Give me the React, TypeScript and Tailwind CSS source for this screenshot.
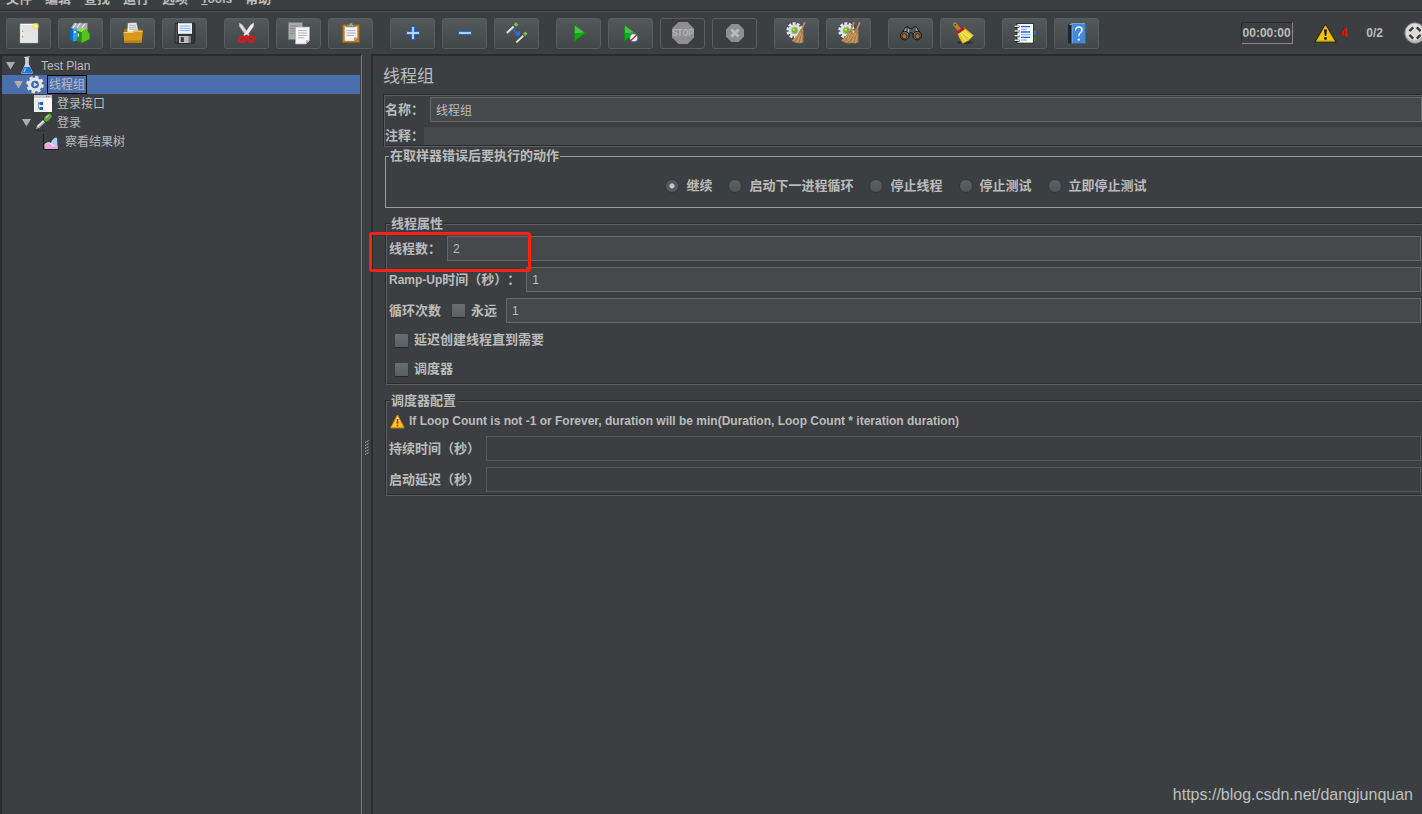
import React, { useState } from "react";

const metal = "#dcdcdc";

function Icon({ children }: { children: React.ReactNode }) {
  return (
    <svg width="25" height="23" viewBox="0 0 25 23" aria-hidden="true">
      {children}
    </svg>
  );
}

function Gear({ x, y }: { x: number; y: number }) {
  return (
    <g transform={`translate(${x} ${y})`}>
      <circle r="6.9" fill="none" stroke="#e6e6e6" strokeWidth="2.6" strokeDasharray="2.9 1.43" />
      <circle r="6.2" fill="#dedede" />
      <circle r="3.6" fill="#b9bdb6" />
      <circle r="2.8" fill="#6cb81c" />
      <circle cx="-0.6" cy="-0.8" r="1.2" fill="#c3ec7c" />
    </g>
  );
}

function Broom({ x }: { x: number }) {
  return (
    <g transform={`translate(${x} 0)`}>
      <path d="M20.5 .8 L17.6 8" stroke="#b58a58" strokeWidth="1.8" strokeLinecap="round" />
      <path d="M16.5 7 L19.4 8.2 L19.4 20.5 L16 21.4 L11 20.6 L7.6 18.6 Q13.5 14 16.5 7Z" fill="#b8894f" />
      <path d="M17 9 L11 20 M18 9 L15 21 M18.6 10 L18 21" stroke="#8a6436" strokeWidth=".5" fill="none" />
      <path d="M17.5 10 L13 20.4 M18.4 12 L16.6 20.6 M16 11 L9.5 18.8" stroke="#dcb684" strokeWidth=".6" fill="none" />
    </g>
  );
}

const icons: Record<string, React.ReactNode> = {
  new: (
    <Icon>
      <defs>
        <radialGradient id="glow">
          <stop offset="0" stopColor="#fffef0" />
          <stop offset=".45" stopColor="#f6e868" />
          <stop offset="1" stopColor="#e8d850" stopOpacity="0" />
        </radialGradient>
      </defs>
      <rect x="4" y="1.7" width="18" height="19.3" fill="#fff" stroke="#8d8d86" strokeWidth=".6" />
      <rect x="5.3" y="3" width="15.6" height="16.8" fill="#e4e4e4" />
      <path d="M6.6 8.5v1.5M6.6 14v1.5" stroke="#999" strokeWidth="1" />
      <circle cx="19.7" cy="4.2" r="4" fill="url(#glow)" />
    </Icon>
  ),
  templates: (
    <Icon>
      <path d="M3 6 L6 .8 L10 1.6 L12 .5 L15 1.5 L19.5 .8 L19.5 8 L5 10Z" fill="#a9adad" />
      <path d="M5 6 L8 1.5 M9 6 L12 1.5 M14 6 L17 1.5" stroke="#e8e8e8" strokeWidth="1.2" />
      <path d="M2 5.5 L5 7 L5 19.5 L2 17.5Z" fill="#1269b0" />
      <path d="M5 7 L9 5.5 L9 18.5 L5 19.5Z" fill="#2fa0e6" />
      <path d="M6 10h2" stroke="#fff" strokeWidth="1.4" />
      <path d="M8.8 8.5 L13.6 10.2 L13.6 21 L8.8 18.4Z" fill="#2a8e10" />
      <path d="M13.6 10.2 L18 6.4 L21.6 12 L21.6 17 L13.6 21Z" fill="#52c41a" />
      <path d="M8.8 8.5 L14 6 L18 6.4 L13.6 10.2Z" fill="#84e24a" />
      <path d="M10.3 11.5v3" stroke="#e8ffe0" strokeWidth="1.4" />
    </Icon>
  ),
  open: (
    <Icon>
      <path d="M4 7 L10 6 L12 8 L22 7.5 L22.5 12 L4 12Z" fill="#a87410" />
      <path d="M8 1 L16.5 .8 L18.6 10.5 L7 11.5Z" fill="#f4f4f4" stroke="#999" strokeWidth=".5" />
      <path d="M9.2 3.2h6.6M9 5.2h7.4M9 7.2h8" stroke="#999" strokeWidth=".8" />
      <path d="M3.3 9.7 L12.5 9.7 L14 8.6 L23 8.6 L21.6 20 Q21.4 21 20.4 21 L5.5 21 Q4.5 21 4.3 20Z" fill="#d99a1c" />
      <path d="M4 10.5 L13 10.5 L14.4 9.4 L22.3 9.4" stroke="#f5cd6c" strokeWidth=".9" fill="none" />
      <path d="M4.5 18.6 L21.8 18.6 L21.5 21 L4.8 21Z" fill="#b87c10" />
    </Icon>
  ),
  save: (
    <Icon>
      <rect x="3" y="1" width="20" height="20.3" rx="1.2" fill="#33353a" stroke="#1c1d20" strokeWidth=".6" />
      <path d="M4.2 2v18" stroke="#666a70" strokeWidth=".8" />
      <rect x="6" y="1.2" width="14" height="10.6" fill="#eef5fc" />
      <path d="M7.5 4h11M7.5 6.3h11M7.5 8.6h11" stroke="#87aede" strokeWidth="1" />
      <rect x="7" y="14" width="12" height="7" fill="#bcbcbc" />
      <rect x="8.8" y="15.2" width="3" height="4.8" fill="#33353a" />
      <rect x="16.6" y="14" width="2.4" height="7" fill="#77797d" />
    </Icon>
  ),
  cut: (
    <Icon>
      <path d="M5 .8 L8.2 2.6 L15.6 13 L13 15.2 L5.4 4.4Z" fill={metal} stroke="#8b8b8b" strokeWidth=".4" />
      <path d="M20 .8 L16.8 2.6 L9.4 13 L12 15.2 L19.6 4.4Z" fill="#f2f2f2" stroke="#8b8b8b" strokeWidth=".4" />
      <ellipse cx="7.9" cy="17.2" rx="2.9" ry="2.5" fill="none" stroke="#d81c1c" strokeWidth="2.4" />
      <ellipse cx="17.1" cy="17.2" rx="2.9" ry="2.5" fill="none" stroke="#d81c1c" strokeWidth="2.4" />
      <path d="M9 14.8 L12.5 12.6 L16 14.8 L12.5 17Z" fill="#d01818" />
    </Icon>
  ),
  copy: (
    <Icon>
      <rect x="2.3" y=".5" width="14" height="17" fill="#a6a9a9" stroke="#787b7b" strokeWidth=".7" />
      <path d="M4.5 4h8M4.5 6.5h5M4.5 9h5M4.5 11.5h4" stroke="#808383" strokeWidth=".8" />
      <path d="M9.5 5 H23.5 V18.5 L20 22 H9.5Z" fill="#f4f4f4" stroke="#aaa" strokeWidth=".6" />
      <path d="M12 8.6h9M12 11h9M12 13.4h9M12 15.8h6" stroke="#b0b0b0" strokeWidth=".9" />
      <path d="M23.5 18.5 H20 V22Z" fill="#aaa" />
    </Icon>
  ),
  paste: (
    <Icon>
      <rect x="4.3" y="2.3" width="17.4" height="18.5" rx="1" fill="#c07c18" stroke="#80500a" strokeWidth=".8" />
      <path d="M6.6 4.5 H19.4 V15.5 L16 19 H6.6Z" fill="#f3f3f3" stroke="#999" strokeWidth=".4" />
      <path d="M8.5 8.6h9M8.5 11h9M8.5 13.4h7.5" stroke="#aaa" strokeWidth=".9" />
      <path d="M19.4 15.5 H16 V19Z" fill="#a9a9a9" />
      <path d="M8.8 4.8 V3 H11 Q11.3 .8 13 .8 T15 3 H17.2 V4.8Z" fill="#a4a79e" stroke="#5e6058" strokeWidth=".6" />
    </Icon>
  ),
  expand: (
    <Icon>
      <path d="M11.5 4.5 H14.5 V9.5 H19.5 V12.5 H14.5 V17.5 H11.5 V12.5 H6.5 V9.5 H11.5Z" fill="#b9d4f2" stroke="#2a68c4" strokeWidth="1.1" />
    </Icon>
  ),
  collapse: (
    <Icon>
      <rect x="6.5" y="9.5" width="13" height="3" fill="#b9d4f2" stroke="#2a68c4" strokeWidth="1.1" />
    </Icon>
  ),
  toggle: (
    <Icon>
      <path d="M3 11 L10 4.2" stroke="#e8e8e8" strokeWidth="2.2" />
      <path d="M3.6 11.8 L10.4 5.2" stroke="#777" strokeWidth=".6" />
      <path d="M9 2.8 L11.5 5.4" stroke="#555" strokeWidth="1.3" />
      <path d="M10.8 3.6 L13.2 1.4" stroke="#7cba58" strokeWidth="3.4" />
      <path d="M12.3 20.3 L19.5 13.6" stroke="#e8e8e8" strokeWidth="1.8" />
      <path d="M18.3 12 L21 14.5" stroke="#555" strokeWidth="1.2" />
      <path d="M20 12.8 L22.6 10.6" stroke="#7cba58" strokeWidth="3.2" />
      <path d="M10 8 L14.3 12.2" stroke="#1c7cf4" strokeWidth="1.8" strokeDasharray="2 .5" />
      <path d="M15.8 8.6 V13.6 H10.8Z" fill="#1c7cf4" />
    </Icon>
  ),
  start: (
    <Icon>
      <path d="M8.2 2 L20 11 L8.2 20Z" fill="#0c8a0c" />
      <path d="M8.8 3.4 L18.4 10.6 L8.8 11.5Z" fill="#58b858" />
      <path d="M8.8 11.3 L18.8 11 L8.8 18.6Z" fill="#0bb00b" />
    </Icon>
  ),
  startNoPause: (
    <Icon>
      <path d="M6.2 2 L17.6 11 L6.2 20Z" fill="#0c8a0c" />
      <path d="M6.8 3.4 L16 10.6 L6.8 11.5Z" fill="#58b858" />
      <path d="M6.8 11.3 L16.4 11 L6.8 18.6Z" fill="#0bb00b" />
      <circle cx="15.8" cy="15.7" r="4.1" fill="#f4f6fb" stroke="#3b78c8" strokeWidth="1.1" />
      <path d="M12.2 19.2 L19.4 12.2" stroke="#d81e1e" strokeWidth="1.4" />
    </Icon>
  ),
  stop: (
    <Icon>
      <path d="M8.5 0 H17.5 L24 6.5 V15.5 L17.5 22 H8.5 L2 15.5 V6.5Z" fill="#8f8f8f" />
      <text x="13" y="14.4" textAnchor="middle" fontSize="8.5" fontWeight="700" fill="#b4b4b4" className="font-['Roboto',sans-serif]">
        STOP
      </text>
    </Icon>
  ),
  shutdown: (
    <Icon>
      <path d="M9.4 2 H16.6 L22 7.4 V14.6 L16.6 20 H9.4 L4 14.6 V7.4Z" fill="#8f8f8f" />
      <path d="M9.4 7.4 L16.6 14.6 M16.6 7.4 L9.4 14.6" stroke="#bcbcbc" strokeWidth="2.8" />
    </Icon>
  ),
  clear: (
    <Icon>
      <Gear x={10.6} y={8.4} />
      <Broom x={0} />
    </Icon>
  ),
  clearAll: (
    <Icon>
      <Gear x={10.4} y={8.4} />
      <Broom x={-2.6} />
      <Broom x={3} />
    </Icon>
  ),
  search: (
    <Icon>
      <path d="M7 6 Q8 3.8 10.5 5 L12.5 7 L13.5 7 L15.5 5 Q18 3.8 19 6 L23 12 L18 17 L14.5 11 H11.5 L8 17 L3 12Z" fill="#54565a" stroke="#151515" strokeWidth="1" />
      <path d="M8 6.5 L6 10.5 M18 6.5 L20 10.5 M11 7 L10 10" stroke="#b5b8bb" strokeWidth="1.2" />
      <circle cx="6.8" cy="13.6" r="4.3" fill="#66696c" stroke="#101010" strokeWidth="1" />
      <circle cx="19.2" cy="13.6" r="4.3" fill="#66696c" stroke="#101010" strokeWidth="1" />
      <circle cx="6.4" cy="14.2" r="2.5" fill="#b86a30" stroke="#2b1608" strokeWidth=".8" />
      <circle cx="19.6" cy="14.2" r="2.5" fill="#b86a30" stroke="#2b1608" strokeWidth=".8" />
    </Icon>
  ),
  reset: (
    <Icon>
      <ellipse cx="15" cy="20.6" rx="8" ry="1.5" fill="#303234" />
      <path d="M5 2.4 L9.6 8" stroke="#b8802c" strokeWidth="4" strokeLinecap="round" />
      <circle cx="5.2" cy="2.8" r=".9" fill="#5c3c10" />
      <path d="M7 10 L14 5.6 L23.6 13.4 L18.6 18.4 L12.6 21.6 Q9.4 17 7 10Z" fill="#e8d02c" stroke="#a88c10" strokeWidth=".5" />
      <path d="M12 10 L20 16 M10.5 11 L16 19 M13.5 8.5 L21.5 14.5" stroke="#fff49a" strokeWidth=".8" />
      <path d="M6.8 11 L14.2 6.2" stroke="#c81818" strokeWidth="2.8" />
    </Icon>
  ),
  functions: (
    <Icon>
      <rect x="21" y="9" width="2.4" height="4.4" fill="#2a7ce0" />
      <rect x="21" y="15" width="2.4" height="4.4" fill="#1c9a28" />
      <rect x="5" y="1.5" width="16.4" height="19.6" fill="#fcfcfc" stroke="#1a1a1a" strokeWidth=".8" />
      <path d="M9 4.6h9M9 10h9M9 15.4h9" stroke="#1a64d8" strokeWidth="1.3" />
      <path d="M9 7.3h6M9 12.7h9.5M9 18h6" stroke="#6f9fe4" strokeWidth="1" />
      <path d="M2.6 4.6h4.8M2.6 9.4h4.8M2.6 14.2h4.8M2.6 18.6h4.8" stroke="#151515" strokeWidth="2.2" />
      <path d="M2.6 4.2h4.4M2.6 9h4.4M2.6 13.8h4.4M2.6 18.2h4.4" stroke="#e2e2e2" strokeWidth="1.6" />
    </Icon>
  ),
  help: (
    <Icon>
      <path d="M4.2 2.6 L8 .8 V21.4 H4.2Z" fill="#1e2228" />
      <path d="M5 2.8 L8 1.2 H21 L21 2.6Z" fill="#cfd6de" />
      <rect x="7.6" y="1.6" width="13.8" height="19.8" fill="#4488dc" />
      <path d="M8.2 1.6v19.8" stroke="#79b2f2" strokeWidth=".8" />
      <path d="M11.6 8.4 Q11.6 5 14.8 5 Q18 5 18 8 Q18 9.8 16.2 11 Q14.8 12 14.8 14.2" stroke="#f2f8ff" strokeWidth="1.5" fill="none" />
      <circle cx="14.8" cy="17.6" r="1.2" fill="#f2f8ff" />
    </Icon>
  ),
};

const toolGroups: { icon: string; label: string; disabled?: boolean }[][] = [
  [
    { icon: "new", label: "新建" },
    { icon: "templates", label: "模板" },
    { icon: "open", label: "打开" },
    { icon: "save", label: "保存" },
  ],
  [
    { icon: "cut", label: "剪切" },
    { icon: "copy", label: "复制" },
    { icon: "paste", label: "粘贴" },
  ],
  [
    { icon: "expand", label: "展开" },
    { icon: "collapse", label: "折叠" },
    { icon: "toggle", label: "切换" },
  ],
  [
    { icon: "start", label: "启动" },
    { icon: "startNoPause", label: "不停顿启动" },
    { icon: "stop", label: "停止", disabled: true },
    { icon: "shutdown", label: "关闭", disabled: true },
  ],
  [
    { icon: "clear", label: "清除" },
    { icon: "clearAll", label: "清除全部" },
  ],
  [
    { icon: "search", label: "查找" },
    { icon: "reset", label: "重置查找" },
  ],
  [
    { icon: "functions", label: "函数助手" },
    { icon: "help", label: "帮助" },
  ],
];

function Toolbar() {
  return (
    <div className="flex shrink-0 items-start border-t border-[#565859] px-1.5 pt-1.5 pb-[5px]">
      <div className="flex shrink-0 gap-[17px]">
        {toolGroups.map((group, i) => (
          <div key={i} className="flex gap-[7px]">
            {group.map((t) => (
              <button
                key={t.icon}
                type="button"
                aria-label={t.label}
                disabled={t.disabled}
                className="flex h-[31px] w-[45px] items-center justify-center rounded-[3px] border border-[#5a5d5f] bg-linear-to-b from-[#53585a] to-[#424749] disabled:bg-none"
              >
                {icons[t.icon]}
              </button>
            ))}
          </div>
        ))}
      </div>
      <div className="-mr-2.5 ml-auto flex h-[30px] shrink-0 items-center text-[12px] font-bold">
        <span className="flex h-[22px] w-[52px] items-center justify-center border border-t-[#27292b] border-r-[#85898b] border-b-[#85898b] border-l-[#27292b]">
          00:00:00
        </span>
        <svg width="23" height="20" viewBox="0 0 23 20" className="ml-[21px]" aria-hidden="true">
          <path d="M11.5 1 L22 19 H1Z" fill="#f2c40c" stroke="#2b2508" strokeWidth="1.2" strokeLinejoin="round" />
          <path d="M11.5 2.8 L20.4 18 H2.6Z" fill="none" stroke="#b89a20" strokeWidth=".7" />
          <path d="M10.1 6.6 H12.9 L12.3 13 H10.7Z" fill="#111" />
          <circle cx="11.5" cy="15.4" r="1.4" fill="#111" />
        </svg>
        <span className="ml-1 text-[#ff0000]">4</span>
        <span className="ml-[19px]">0/2</span>
        <svg width="22" height="22" viewBox="0 0 22 22" className="ml-[21px]" aria-hidden="true">
          <circle cx="11" cy="11" r="10.4" fill="#b9b9b9" stroke="#6d6d6d" strokeWidth=".6" />
          <circle cx="10.4" cy="10" r="8.6" fill="#dcdcdc" />
          <path d="M5.4 9.2 L9.2 5.4 M12.8 5.4 L16.6 9.2 M16.6 12.8 L12.8 16.6 M9.2 16.6 L5.4 12.8" stroke="#3a3c3e" strokeWidth="2.4" />
        </svg>
      </div>
    </div>
  );
}

const flask = (
  <svg width="18" height="19" viewBox="0 0 18 19" aria-hidden="true">
    <path d="M7.2 1.5 H10.8 V8 L14.8 16.6 Q15 18 13.6 18 H4.4 Q3 18 3.2 16.6 L7.2 8Z" fill="#c9d6e2" />
    <path d="M6 11 H12 L14.4 16.6 Q14.4 17.4 13.5 17.4 H4.5 Q3.6 17.4 3.6 16.6Z" fill="#1c7ad0" />
    <path d="M7.5 12 L6 16" stroke="#8cc8f6" strokeWidth="1.3" />
    <path d="M6.4 1.5 L11.6 .8" stroke="#e6ecf2" strokeWidth="1" />
  </svg>
);

const treeGear = (
  <svg width="18" height="19" viewBox="0 0 18 19" aria-hidden="true">
    <circle cx="9" cy="9.5" r="7.3" fill="none" stroke="#e2e4e8" strokeWidth="3" strokeDasharray="3.2 2.53" />
    <circle cx="9" cy="9.5" r="5.4" fill="#3c5f9c" stroke="#e4e4e6" strokeWidth="3.2" />
    <circle cx="9" cy="9.5" r="3.4" fill="#3b6ab4" />
    <path d="M7.8 7.2 L11.6 9.5 L7.8 11.8Z" fill="#dbe8fa" />
  </svg>
);

const treeWindow = (
  <svg width="18" height="19" viewBox="0 0 18 19" aria-hidden="true">
    <rect x="0" y="1" width="18" height="17" fill="#fafafa" />
    <rect x="0" y="1" width="18" height="3" fill="#c6cad0" />
    <path d="M12 2.5h1.2M14.2 2.5h1.2" stroke="#777" strokeWidth="1" />
    <rect x="1" y="5" width="9" height="12" fill="#e3ebf6" />
    <path d="M4.5 8 V14.5 H7 M4.5 9.5 H7" stroke="#777" strokeWidth=".8" fill="none" />
    <rect x="5.6" y="8" width="3.4" height="3" fill="#1f64c8" />
    <rect x="5.6" y="13" width="3.4" height="3" fill="#1f64c8" />
  </svg>
);

const pipette = (
  <svg width="18" height="19" viewBox="0 0 18 19" aria-hidden="true">
    <path d="M2 17.6 H13" stroke="#303234" strokeWidth="1" />
    <path d="M1 16.8 L3 12.6 L9.2 6.6 L11.8 9.2 L5.4 15.2Z" fill="#a9adad" stroke="#2a2a2a" strokeWidth=".6" />
    <path d="M3.4 13.4 L9.6 7.8" stroke="#f2f2f2" strokeWidth="1.3" />
    <path d="M8.8 5.4 L13 9.6" stroke="#282828" strokeWidth="1.6" />
    <path d="M12.4 6 L15.2 3.2" stroke="#5aa63a" strokeWidth="5" strokeLinecap="round" />
    <path d="M12.2 4.6 L14.4 2.6" stroke="#a4dc88" strokeWidth="1.3" strokeLinecap="round" />
  </svg>
);

const chart = (
  <svg width="18" height="19" viewBox="0 0 18 19" aria-hidden="true">
    <path d="M1.5 2 V17.5 H16.5" stroke="#1d1f20" strokeWidth="1" fill="none" />
    <path d="M7.5 14 L10 8.5 Q13 4 15 6 L15.6 16 L9 16Z" fill="#a9d0f0" />
    <path d="M2.5 17 V13 Q5 9.5 8.4 11 Q10 14.5 12.4 13.4 L15.6 14.4 V17Z" fill="#f0a4dc" />
    <path d="M2.5 13 Q5 9.5 8.4 11 Q10 14.5 12.4 13.4" stroke="#fff" strokeWidth=".8" fill="none" />
  </svg>
);

const nodes = [
  { label: "Test Plan", icon: flask, open: true, pad: "pl-1" },
  { label: "线程组", icon: treeGear, open: true, pad: "pl-3" },
  { label: "登录接口", icon: treeWindow, open: false, pad: "pl-5" },
  { label: "登录", icon: pipette, open: true, pad: "pl-5" },
  { label: "察看结果树", icon: chart, open: false, pad: "pl-7" },
];

function Tree() {
  const [selected, setSelected] = useState("线程组");
  return (
    <nav className="w-[362px] shrink-0 border-t-2 border-r border-l-2 border-t-[#292b2d] border-r-[#77797b] border-l-[#292b2d]">
      <ul className="mr-px">
        {nodes.map((n) => {
          const active = n.label === selected;
          return (
            <li key={n.label}>
              <button
                type="button"
                onClick={() => setSelected(n.label)}
                className={`flex h-[19px] w-full items-center gap-[3px] ${n.pad} ${active ? "bg-[#4b6eaf]" : ""}`}
              >
                <svg width="9" height="9" viewBox="0 0 9 9" aria-hidden="true">
                  {n.open && <path d="M0 1 H9 L4.5 8.6Z" fill="#adadad" />}
                </svg>
                {n.icon}
                <span className={`flex h-[19px] items-center border px-px ${active ? "border-black" : "border-transparent"}`}>{n.label}</span>
              </button>
            </li>
          );
        })}
      </ul>
    </nav>
  );
}

const field =
  "h-[25px] w-full min-w-0 flex-1 border border-[#646667] bg-[#45494a] px-[5px] text-[12px] font-normal text-[#bbbbbb] outline-none disabled:border-[#555859] disabled:bg-transparent";
const check =
  "h-[13px] w-[13px] shrink-0 appearance-none rounded-[1px] bg-linear-to-b from-[#6b6e70] to-[#5c5f61] shadow-[0_1px_1px_#242628] checked:bg-[#4b6eaf]";
const radio =
  "h-[14px] w-[14px] shrink-0 appearance-none rounded-full border border-[#35383a] bg-linear-to-b from-[#5c6164] to-[#505557] checked:bg-[radial-gradient(circle,#c4c4c4_0_2px,#55595b_3px)]";
const group = "min-w-0 border border-r-0 border-[#5b5e60] shadow-[-1px_-1px_0_#2a2c2e,inset_0_-1px_0_#2a2c2e]";
const groupLegend = "ml-px bg-[#3c3f41] px-px";

const actions = ["继续", "启动下一进程循环", "停止线程", "停止测试", "立即停止测试"];

function ThreadGroup() {
  return (
    <main className="min-w-0 flex-1 border-t-2 border-l-2 border-[#292b2d] pl-2.5 text-[13px] leading-[18px] font-bold [text-spacing-trim:space-all]">
      <h1 className="flex h-[39px] items-center pt-[3px] text-[17px] font-normal">线程组</h1>

      <section className={`${group} ml-px pt-px pb-px`}>
        <div className="flex items-center gap-1.5">
          <label htmlFor="name">名称：</label>
          <input id="name" defaultValue="线程组" className={field} />
        </div>
        <div className="mt-[5px] flex items-center">
          <label htmlFor="comment">注释：</label>
          <input id="comment" className="h-[18px] min-w-0 flex-1 bg-[#45494a] px-1.5 text-[12px] font-normal outline-none" />
        </div>
      </section>

      <fieldset className="ml-0.5 min-w-0 border border-r-0 border-[#999b9c] py-3">
        <legend className="ml-[3px] px-px">在取样器错误后要执行的动作</legend>
        <div className="flex justify-center gap-4 pl-1">
          {actions.map((a, i) => (
            <label key={a} className="flex items-center gap-[7px]">
              <input type="radio" name="onError" defaultChecked={i === 0} className={radio} />
              {a}
            </label>
          ))}
        </div>
      </fieldset>

      <fieldset className={`${group} mt-[7px] ml-[3px] pt-[3px] pr-px pb-1.5 pl-0.5`}>
        <legend className={groupLegend}>线程属性</legend>
        <div className="relative flex items-center gap-1.5">
          <label htmlFor="threads">线程数：</label>
          <input id="threads" defaultValue="2" className={field} />
          <span className="pointer-events-none absolute -top-1 -left-5 h-10 w-[162px] rounded-[3px] border-3 border-[#ff2114]" />
        </div>
        <div className="mt-1.5 flex items-center gap-1.5">
          <label htmlFor="ramp">
            <span className="text-[12px]">Ramp-Up</span>时间（秒）：
          </label>
          <input id="ramp" defaultValue="1" className={field} />
        </div>
        <div className="mt-1.5 flex items-center">
          <label htmlFor="loops">循环次数</label>
          <label className="mr-[9px] ml-[11px] flex items-center gap-1.5">
            <input type="checkbox" className={check} />
            永远
          </label>
          <input id="loops" defaultValue="1" className={field} />
        </div>
        <div className="mt-2 flex flex-col items-start gap-[11px] pl-1.5">
          <label className="flex items-center gap-1.5">
            <input type="checkbox" className={check} />
            延迟创建线程直到需要
          </label>
          <label className="flex items-center gap-1.5">
            <input type="checkbox" className={check} />
            调度器
          </label>
        </div>
      </fieldset>

      <fieldset className={`${group} mt-[7px] ml-[3px] pt-0.5 pr-px pb-[3px] pl-0.5`}>
        <legend className={groupLegend}>调度器配置</legend>
        <p className="flex items-center gap-1 pl-px text-[12px]">
          <svg width="15" height="15" viewBox="0 0 15 15" aria-hidden="true">
            <path d="M7.5 1 L14.2 13.8 H.8Z" fill="#ffc81e" stroke="#e88a10" strokeWidth="1" strokeLinejoin="round" />
            <path d="M7.5 2.6 L10 7.4 H5Z" fill="#ffe98a" />
            <path d="M7.5 5v4.6" stroke="#b83208" strokeWidth="1.8" />
            <circle cx="7.5" cy="11.6" r="1" fill="#b83208" />
          </svg>
          If Loop Count is not -1 or Forever, duration will be min(Duration, Loop Count * iteration duration)
        </p>
        <div className="mt-1.5 flex items-center gap-1.5">
          <label htmlFor="duration">持续时间（秒）</label>
          <input id="duration" disabled className={field} />
        </div>
        <div className="mt-1.5 flex items-center gap-1.5">
          <label htmlFor="delay">启动延迟（秒）</label>
          <input id="delay" disabled className={field} />
        </div>
      </fieldset>
    </main>
  );
}

const menus = ["文件", "编辑", "查找", "运行", "选项", "Tools", "帮助"];

export default function App() {
  return (
    <div className="relative flex h-screen flex-col overflow-hidden bg-[#3c3f41] font-['Liberation_Sans','Noto_Sans_CJK_SC',sans-serif] text-[12px] text-[#bbbbbb]">
      <div className="flex h-[11px] shrink-0 items-end gap-[13px] overflow-hidden border-b border-[#27292b] px-1.5 pb-1 text-[13px] leading-[14px] font-bold">
        {menus.map((m) =>
          m === "Tools" ? (
            <button key={m} type="button" className="text-[12px]">
              <u>T</u>ools
            </button>
          ) : (
            <button key={m} type="button">
              {m}
            </button>
          ),
        )}
      </div>
      <Toolbar />
      <div className="flex min-h-0 flex-1">
        <Tree />
        <div className="flex w-[9px] shrink-0 items-center justify-center pt-7 pl-0.5">
          <svg width="5" height="16" viewBox="0 0 5 16" aria-hidden="true">
            <path d="M0 2.5 L4 .5 M0 5.5 L4 3.5 M0 8.5 L4 6.5 M0 11.5 L4 9.5 M0 14.5 L4 12.5" stroke="#c9c9c9" strokeWidth="1" strokeDasharray="1.2 .8" />
          </svg>
        </div>
        <ThreadGroup />
      </div>
      <a href="https://blog.csdn.net/dangjunquan" className="absolute right-[9px] bottom-2 text-[16px] leading-[22px] text-[#bfc0c1]">
        https://blog.csdn.net/dangjunquan
      </a>
    </div>
  );
}
